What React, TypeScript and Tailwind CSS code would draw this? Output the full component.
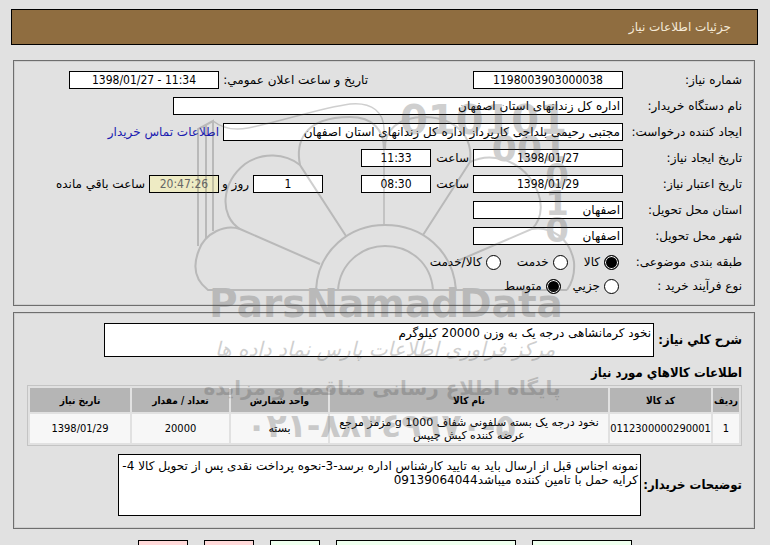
import { ReactNode } from "react";

const items = [
    {
        id: 1,
        code: "0112300000290001",
        name: "نخود درجه یک بسته سلفونی شفاف 1000 g مزمز مرجع عرضه کننده کیش چیپس",
        unit: "بسته",
        count: "20000",
        date: "1398/01/29",
    },
]

const actions = [
    { label: "پاسخ به نیاز", className: "w-[100px] bg-[#eeffee]" },
    { label: "مشاهده مدارک پیوستی", className: "w-[180px] bg-[#eeffee]" },
    { label: "چاپ", className: "w-[50px] bg-[#eeffee]" },
    { label: "بازگشت", className: "w-[50px] bg-[#ffd9d9]" },
    { label: "خروج", className: "w-[50px] bg-[#ffd9d9]" },
]

const condensed = "font-['DejaVu_Sans_Condensed','DejaVu_Sans',sans-serif]"
const numeric = `bg-white text-center ${condensed}`
const strong = `shrink-0 whitespace-nowrap text-[13px] font-bold ${condensed}`
const panel = "ml-0.5 mr-[3px] border border-[#6e6e6e] pr-3 pl-[13px] pt-2.5 shadow-[inset_0_0_0_1px_#cfcfcf]"

function Row({ label, htmlFor, children }: { label: string; htmlFor: string; children: ReactNode }) {
    return (
        <div className="flex h-[18px] items-center gap-1 whitespace-nowrap">
            <label htmlFor={htmlFor} className="w-[115px] shrink-0">{label}</label>
            {children}
        </div>
    )
}

function Field({ id, value, className = "", dir }: { id: string; value: string; className?: string; dir?: string }) {
    return (
        <input
            id={id}
            dir={dir}
            readOnly
            defaultValue={value}
            className={`h-[18px] min-w-0 border border-black px-0.5 ${className}`}
        />
    )
}

function Radio({ name, label, checked }: { name: string; label: string; checked?: boolean }) {
    return (
        <label className="flex items-center gap-1">
            <input
                type="radio"
                name={name}
                defaultChecked={checked}
                className="size-[15px] appearance-none rounded-full border border-black bg-white checked:bg-black checked:shadow-[inset_0_0_0_1px_#fff]"
            />
            {label}
        </label>
    )
}

function Watermark() {
    return (
        <svg aria-hidden="true" direction="ltr" viewBox="0 0 770 545" className="pointer-events-none absolute top-0 left-1/2 h-[545px] w-[770px] -translate-x-1/2 opacity-25">
            <g fill="none" stroke="#444" strokeWidth="2">
                <path d="M198 246V129L213 121V231M206 238V125" />
                <path d="M213 121C222 128 232 131 248 128C280 122 320 108 350 104C372 102 385 112 384 132V225" strokeWidth="1.5" />
                <path d="M346 236L300 165C296 145 301 117 350 117C373 117 384 130 384 150" />
                <path d="M385 150C384 130 398 117 425 117C458 118 473 138 470 162L423 235" />
                <path d="M300 165C285 153 262 152 245 164C221 183 219 216 240 229L320 264" />
                <path d="M240 229C225 224 205 233 199 250C192 267 195 280 208 290H567" />
                <path d="M470 162C490 152 515 159 530 178C546 200 542 219 532 229L455 262" />
                <path d="M532 229C551 226 570 238 574 262C575 274 572 283 567 290" />
                <path d="M316 290C318 250 350 225 385 225C422 225 453 250 456 290M338 290C340 263 362 246 385 246C410 246 431 263 433 290" />
            </g>
            <g fill="#444" className="font-['DejaVu_Sans']" fontWeight="bold">
                <text x="567" y="134" fontSize="40" textAnchor="end">010101</text>
                <text x="567" y="161" fontSize="36" textAnchor="end">001</text>
                <text x="569" y="188" fontSize="34" textAnchor="end">0</text>
                <text x="569" y="215" fontSize="34" textAnchor="end">1</text>
                <text x="569" y="242" fontSize="34" textAnchor="end">0</text>
                <text x="386" y="317" fontSize="39" textAnchor="middle">ParsNamadData</text>
                <text x="382" y="395" fontSize="20" textAnchor="middle">پایگاه اطلاع رسانی مناقصه و مزایده</text>
                <text x="381" y="437" fontSize="33" textAnchor="middle">۰۲۱-۸۸۳٤۹٦۷۰-۵</text>
            </g>
            <text x="385" y="356" fontSize="20" textAnchor="middle" fontStyle="italic" fill="#444" className="font-['DejaVu_Sans']">مرکز فرآوری اطلاعات پارس نماد داده ها</text>
        </svg>
    )
}

export default function App() {
    return (
        <div dir="rtl" className="relative h-screen overflow-hidden bg-[#e1e1e1] pr-3 pl-[11px] pt-[9px] font-['DejaVu_Sans',sans-serif] text-[12px] leading-4 text-black">
            <h1 className="flex h-9 items-center border border-black bg-[#8f6d40] px-[26px] text-[#f5ead8]">جزئیات اطلاعات نیاز</h1>

            <section className={`mt-[15px] flex h-[246px] flex-col gap-2 ${panel}`}>
                <Row label="شماره نیاز:" htmlFor="number">
                    <Field id="number" value="1198003903000038" className={`w-[150px] ${numeric}`} />
                    <label htmlFor="announce" className="mr-[101px] w-[145px]">تاریخ و ساعت اعلان عمومي:</label>
                    <Field id="announce" dir="ltr" value="1398/01/27 - 11:34" className={`w-[150px] ${numeric}`} />
                </Row>
                <Row label="نام دستگاه خریدار:" htmlFor="org">
                    <Field id="org" value="اداره کل زندانهای استان اصفهان" className="w-[450px] bg-white" />
                </Row>
                <Row label="ایجاد کننده درخواست:" htmlFor="creator">
                    <Field id="creator" value="مجتبی رحیمی بلداجی کارپرداز اداره کل زندانهای استان اصفهان" className="w-[400px] bg-white" />
                    <a href="#contact" className="text-[#1a1ab0]">اطلاعات تماس خریدار</a>
                </Row>
                <Row label="تاریخ ایجاد نیاز:" htmlFor="created">
                    <Field id="created" value="1398/01/27" className={`w-[150px] ${numeric}`} />
                    <label htmlFor="created-time" className="w-[34px]">ساعت</label>
                    <Field id="created-time" value="11:33" className={`w-[70px] ${numeric}`} />
                </Row>
                <Row label="تاریخ اعتبار نیاز:" htmlFor="valid">
                    <Field id="valid" value="1398/01/29" className={`w-[150px] ${numeric}`} />
                    <label htmlFor="valid-time" className="w-[34px]">ساعت</label>
                    <Field id="valid-time" value="08:30" className={`w-[70px] ${numeric}`} />
                    <Field id="days" value="1" className={`mr-[34px] w-[70px] ${numeric}`} />
                    <label htmlFor="days" className="w-[26px]">روز و</label>
                    <Field id="left" value="20:47:26" className={`w-[70px] bg-[#eeebc4] text-center text-[#666] ${condensed}`} />
                    <label htmlFor="left">ساعت باقي مانده</label>
                </Row>
                <Row label="استان محل تحویل:" htmlFor="province">
                    <Field id="province" value="اصفهان" className="w-[150px] bg-white" />
                </Row>
                <Row label="شهر محل تحویل:" htmlFor="city">
                    <Field id="city" value="اصفهان" className="w-[150px] bg-white" />
                </Row>
                <div role="radiogroup" aria-label="طبقه بندی موضوعی" className="flex h-[18px] items-center">
                    <span className="w-[123px]">طبقه بندی موضوعی:</span>
                    <div className="flex gap-4">
                        <Radio name="category" label="کالا" checked />
                        <Radio name="category" label="خدمت" />
                        <Radio name="category" label="کالا/خدمت" />
                    </div>
                </div>
                <div role="radiogroup" aria-label="نوع فرآیند خرید" className="-mt-0.5 flex h-[18px] items-center">
                    <span className="w-[123px]">نوع فرآیند خرید :</span>
                    <div className="flex gap-3">
                        <Radio name="process" label="جزیي" />
                        <Radio name="process" label="متوسط" checked />
                    </div>
                </div>
            </section>

            <section className={`mt-1.5 h-[217px] ${panel}`}>
                <div className="flex items-center gap-1">
                    <label htmlFor="summary" className={`w-[84px] ${strong}`}>شرح كلي نیاز:</label>
                    <textarea id="summary" readOnly defaultValue="نخود کرمانشاهی درجه یک به وزن 20000 کیلوگرم" className="h-[34px] w-[550px] resize-none border border-black bg-white px-0.5 pt-0.5 leading-[14px]" />
                </div>
                <h2 className={`mt-2 mb-1 ${strong}`}>اطلاعات کالاهاي مورد نیاز</h2>
                <table className="w-full table-fixed border-separate border-spacing-0.5 border border-[#c4c4c4] text-center text-[11px] leading-[13px]">
                    <thead>
                        <tr className={`h-6 bg-[#b5b5b5] text-[10px] ${condensed}`}>
                            <th className="w-[26px]">ردیف</th>
                            <th className="w-[101px]">کد کالا</th>
                            <th>نام کالا</th>
                            <th className="w-[97px]">واحد شمارش</th>
                            <th className="w-[97px]">تعداد / مقدار</th>
                            <th className="w-[100px]">تاریخ نیاز</th>
                        </tr>
                    </thead>
                    <tbody>
                        {items.map((item) => (
                            <tr className="h-[29px] bg-[#f7f7f7]" key={item.id}>
                                <td className={condensed}>{item.id}</td>
                                <td className={condensed}>{item.code}</td>
                                <td className="px-2">{item.name}</td>
                                <td>{item.unit}</td>
                                <td className={condensed}>{item.count}</td>
                                <td className={condensed}>{item.date}</td>
                            </tr>
                        ))}
                    </tbody>
                </table>
                <div className="mt-2 flex items-center gap-1">
                    <label htmlFor="notes" className={`w-[97px] ${strong}`}>توضیحات خریدار:</label>
                    <textarea id="notes" readOnly defaultValue="نمونه اجناس قبل از ارسال باید به تایید کارشناس اداره برسد-3-نحوه پرداخت نقدی پس از تحویل کالا 4-کرایه حمل با تامین کننده میباشد09139064044" className="h-[62px] w-[523px] resize-none border border-black bg-white px-0.5 pt-1 leading-[14px]" />
                </div>
            </section>

            <div className="mt-[11px] flex justify-center gap-4">
                {actions.map((action) => (
                    <button aria-label={action.label} className={`h-6 border border-black ${action.className}`} key={action.label}></button>
                ))}
            </div>
            <Watermark />
        </div>
    );
}
